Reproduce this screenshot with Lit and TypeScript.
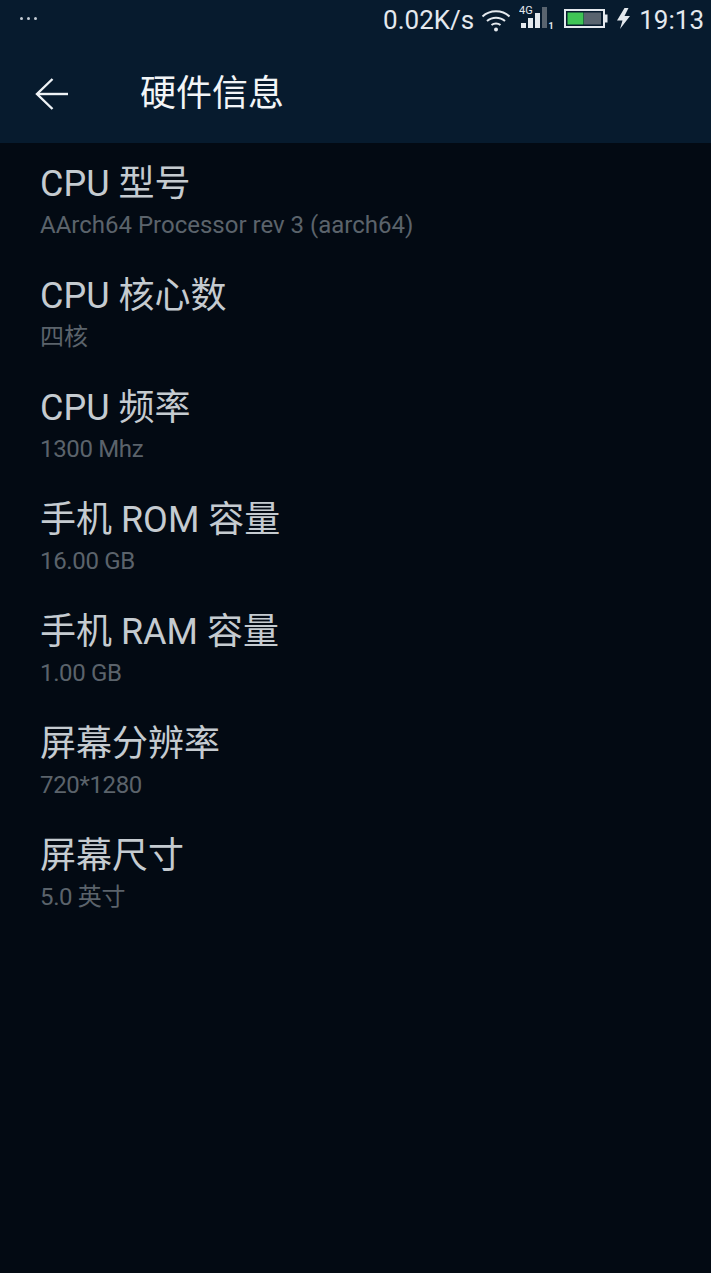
import { LitElement, html, css, svg } from 'lit';
import { customElement } from 'lit/decorators.js';

const ITEMS = [
  { title: 'CPU 型号', value: 'AArch64 Processor rev 3 (aarch64)' },
  { title: 'CPU 核心数', value: '四核' },
  { title: 'CPU 频率', value: '1300 Mhz', tight: true },
  { title: '手机 ROM 容量', value: '16.00 GB', tight: true },
  { title: '手机 RAM 容量', value: '1.00 GB', tight: true },
  { title: '屏幕分辨率', value: '720*1280', tight: true },
  { title: '屏幕尺寸', value: '5.0 英寸', tight: true },
];

const wifiIcon = svg`
  <svg class="wifi" width="30" height="24" viewBox="0 0 30 24" fill="none" stroke="#e4e9ee" stroke-width="2">
    <path d="M1.5 8.5C9 1.5 21 1.5 28.5 8.5" />
    <path d="M6 13C11 8.5 19 8.5 24 13" />
    <path d="M10.5 17C13 15 17 15 19.5 17" />
    <circle cx="15" cy="21.5" r="2" fill="#e4e9ee" stroke="none" />
  </svg>`;

const signalIcon = svg`
  <svg class="signal" width="36" height="30" viewBox="0 0 36 30">
    <text x="0" y="9" font-size="11" font-family="Roboto, sans-serif" fill="#e4e9ee">4G</text>
    <rect x="2" y="18" width="5" height="5" fill="#e4e9ee" />
    <rect x="9" y="13" width="5" height="10" fill="#e4e9ee" />
    <rect x="16" y="8" width="5" height="15" fill="#e4e9ee" />
    <rect x="23" y="2" width="5" height="21" fill="#59646f" />
    <text x="29.5" y="24" font-size="9" font-weight="700" font-family="Roboto, sans-serif" fill="#e4e9ee">1</text>
  </svg>`;

const batteryIcon = svg`
  <svg class="battery" width="44" height="22" viewBox="0 0 44 22">
    <rect x="1" y="1" width="39" height="17" fill="none" stroke="#e4e9ee" stroke-width="2" />
    <rect x="3.5" y="3.5" width="16" height="12" fill="#3fc556" />
    <rect x="20" y="3.5" width="17" height="12" fill="#59646f" />
    <rect x="41" y="5.5" width="2.5" height="8" fill="#e4e9ee" />
  </svg>`;

const boltIcon = svg`
  <svg class="bolt" width="14" height="24" viewBox="0 0 14 24">
    <path d="M8.5 0L1 12.5H6.5L4 21L14 8H8.5L12.5 0Z" fill="#e4e9ee" />
  </svg>`;

const backIcon = svg`
  <svg width="34" height="32" viewBox="0 0 34 32" fill="none" stroke="#eef2f5" stroke-width="2.4">
    <path d="M17.5 1L2 16L17.5 31" />
    <path d="M2 16H33" />
  </svg>`;

@customElement('app-root')
export class AppRoot extends LitElement {
  static styles = css`
    :host {
      display: block;
      min-height: 1273px;
      background: #030a13;
      font-family: Roboto, "Noto Sans CJK SC", sans-serif;
    }

    .top {
      background: #071b2e;
    }

    .status {
      height: 40px;
      display: flex;
      align-items: center;
      padding: 0 7px 0 20px;
      color: #e4e9ee;
    }

    .dots {
      display: flex;
      gap: 4px;
      margin-bottom: 3px;
    }

    .dots i {
      width: 3px;
      height: 3px;
      background: #c4ccd4;
      border-radius: 50%;
    }

    .right {
      margin-left: auto;
      display: flex;
      align-items: center;
    }

    .speed,
    .time {
      font-size: 26px;
      line-height: 40px;
    }

    .wifi {
      margin-left: 7px;
    }

    .signal {
      margin-left: 8px;
    }

    .battery {
      margin-left: 9px;
    }

    .bolt {
      margin-left: 8px;
    }

    .time {
      margin-left: 9px;
    }

    .toolbar {
      height: 99px;
      padding: 4px 0 0 35px;
      display: flex;
      align-items: center;
      color: #f2f5f7;
    }

    .toolbar svg {
      margin-right: 71px;
    }

    .toolbar h1 {
      margin: 0;
      font-size: 36px;
      font-weight: 400;
      line-height: 48px;
    }

    .list {
      padding: 17px 0 0 40px;
    }

    .item {
      height: 112px;
    }

    .name {
      font-size: 36px;
      line-height: 48px;
      color: #c5cbd0;
    }

    .value {
      font-size: 24px;
      line-height: 34px;
      color: #5b636b;
    }

    .value.tight {
      letter-spacing: -0.35px;
    }
  `;

  render() {
    return html`
      <div class="top">
        <div class="status">
          <div class="dots"><i></i><i></i><i></i></div>
          <div class="right">
            <span class="speed">0.02K/s</span>
            ${wifiIcon}${signalIcon}${batteryIcon}${boltIcon}
            <span class="time">19:13</span>
          </div>
        </div>
        <div class="toolbar">
          ${backIcon}
          <h1>硬件信息</h1>
        </div>
      </div>
      <div class="list">
        ${ITEMS.map(
          (i) => html`
            <div class="item">
              <div class="name">${i.title}</div>
              <div class="value ${i.tight ? 'tight' : ''}">${i.value}</div>
            </div>
          `
        )}
      </div>
    `;
  }
}
